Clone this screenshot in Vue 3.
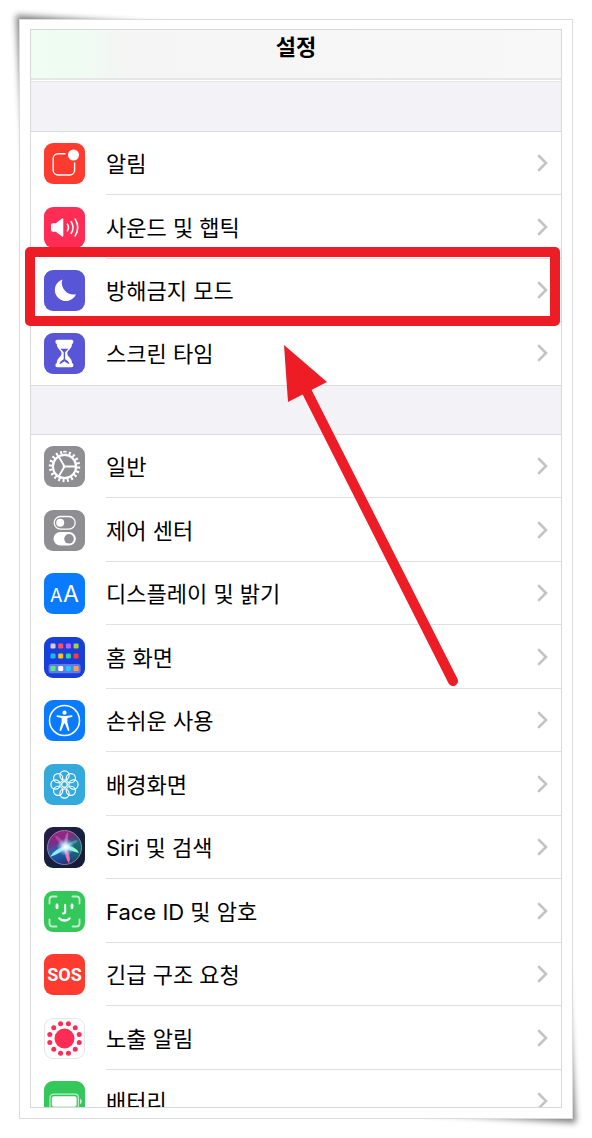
<template>
  <main class="page">
    <div class="frame">
      <svg class="shade shade-tl" viewBox="0 0 190 190" aria-hidden="true">
        <path d="M16 15L170 25L60 60L25 170z" />
      </svg>
      <svg class="shade shade-br" viewBox="0 0 190 190" aria-hidden="true">
        <path d="M174 175L20 165L130 130L165 20z" />
      </svg>

      <div class="screen">
        <header class="bar">
          <h1 class="title">설정</h1>
        </header>

        <template v-for="(group, g) in groups" :key="g">
          <div class="band" :class="{ first: g === 0 }"></div>
          <ul class="group">
            <li v-for="item in group" :key="item.icon" class="item" :class="{ cut: item.cut }">
              <a href="#" class="row" @click.prevent>
                <svg class="icon" :class="item.icon" viewBox="0 0 41 41" fill="none" aria-hidden="true">
                  <g v-if="item.icon === 'bell'">
                    <path d="M21.5 10.8H14a4.8 4.8 0 0 0-4.8 4.8v11.6A4.8 4.8 0 0 0 14 32h11.8a4.8 4.8 0 0 0 4.8-4.8V19.5" stroke="#fff" stroke-width="1.4" />
                    <circle cx="29.5" cy="12" r="5.5" fill="#fff" />
                  </g>
                  <g v-else-if="item.icon === 'sound'" stroke="#fff" stroke-linecap="round">
                    <path d="M7 18q0-1.8 1.8-1.8h3l5.9-4.5q1.6-1.1 1.6.8v16q0 1.9-1.6.8l-5.9-4.5h-3Q7 24.8 7 23z" fill="#fff" stroke="none" />
                    <path d="M23.4 17.2q2.2 3.3 0 6.6M27.2 14.7q3.7 5.8 0 11.6M31.2 12.2q5.2 8.3 0 16.6" stroke-width="1.6" />
                  </g>
                  <path v-else-if="item.icon === 'moon'" d="M18.4 9.6A11 11 0 1 0 32 24.2A11.5 11.5 0 0 1 18.4 9.6z" fill="#fff" />
                  <g v-else-if="item.icon === 'hourglass'">
                    <path d="M13 6.8h14.8q1.6 0 1.6 1.9t-1.4 2.3c0 5-4.7 6.2-4.7 9.5s4.7 4.500 4.7 9.5q1.4.4 1.4 2.3t-1.6 1.9H13q-1.6 0-1.6-1.9t1.4-2.3c0-5 4.7-6.2 4.7-9.5s-4.7-4.5-4.7-9.5q-1.4-.4-1.4-2.3t1.6-1.9z" fill="#fff" />
                    <path d="M16.4 15.8h8l-3.3 3.5v7q3.7 1.7 4.4 4.5h-1.5l-3.6-2.6-3.6 2.6h-1.5q.7-2.8 4.4-4.5v-7z" fill="#5856d6" />
                  </g>
                  <g v-else-if="item.icon === 'gear'" stroke="#fff">
                    <circle cx="20.5" cy="20.5" r="11.6" stroke-width="2.2" />
                    <circle cx="20.5" cy="20.5" r="14" stroke-width="3.4" pathLength="40" stroke-dasharray=".9 1.1" />
                    <path d="M32 20.5H20.5L14.7 10.5M20.5 20.5L14.7 30.5" stroke-width="1.8" />
                    <circle cx="20" cy="20.5" r="1" fill="#fff" />
                  </g>
                  <g v-else-if="item.icon === 'control'">
                    <rect x="10.2" y="6.5" width="21" height="12.6" rx="6.3" stroke="#fff" stroke-width="1.3" />
                    <circle cx="16.2" cy="12.8" r="4" fill="#fff" />
                    <rect x="9.5" y="22" width="22.4" height="13.6" rx="6.8" fill="#fff" />
                    <circle cx="25" cy="28.8" r="4.8" fill="#8e8e93" />
                  </g>
                  <g v-else-if="item.icon === 'display'" class="letters">
                    <text x="6" y="29" class="small">A</text>
                    <text x="19" y="29" class="large">A</text>
                  </g>
                  <g v-else-if="item.icon === 'home'">
                    <rect x="4.6" y="27" width="32" height="9.3" rx="2.5" fill="#fff" fill-opacity=".32" />
                    <rect v-for="app in apps" :key="app.key" :x="app.x" :y="app.y" width="5" height="5" rx="1.2" :fill="app.color" />
                  </g>
                  <g v-else-if="item.icon === 'access'">
                    <circle cx="20.5" cy="20.5" r="15" stroke="#fff" stroke-width="1.5" />
                    <circle cx="20.5" cy="12.7" r="2.1" fill="#fff" />
                    <path d="M13.5 15.2q7 1.6 14 0 .9-.1 1 .7t-.8 1.1l-4.3.9v4.3l2 7.7q.1 1-.7 1.1t-1.1-.7l-2.7-6.8h-.8l-2.7 6.8q-.3.8-1.1.7t-.7-1.1l2-7.700v-4.300l-4.300-.9q-.9-.3-.8-1.100t1-.7z" fill="#fff" />
                  </g>
                  <g v-else-if="item.icon === 'wallpaper'" stroke="#fff" stroke-width="1.2">
                    <circle v-for="p in petals" :key="p.key" :cx="p.x" :cy="p.y" r="4.6" />
                    <circle cx="20.5" cy="20.5" r="2.8" />
                  </g>
                  <g v-else-if="item.icon === 'siri'">
                    <defs>
                      <linearGradient id="orb" x1=".3" y1="0" x2=".6" y2="1">
                        <stop offset="0" stop-color="#a3217e" />
                        <stop offset=".3" stop-color="#7a2d86" />
                        <stop offset=".55" stop-color="#2766a8" />
                        <stop offset=".8" stop-color="#1c4b9c" />
                        <stop offset="1" stop-color="#31265e" />
                      </linearGradient>
                      <radialGradient id="teal" cx=".95" cy=".55" r=".55">
                        <stop offset="0" stop-color="#136b62" />
                        <stop offset="1" stop-color="#136b62" stop-opacity="0" />
                      </radialGradient>
                      <radialGradient id="glow">
                        <stop offset="0" stop-color="#fff" />
                        <stop offset=".35" stop-color="#d9f6ff" stop-opacity=".85" />
                        <stop offset="1" stop-color="#7fd4ff" stop-opacity="0" />
                      </radialGradient>
                    </defs>
                    <circle cx="20.5" cy="20.5" r="17" fill="url(#orb)" />
                    <circle cx="20.5" cy="20.5" r="17" fill="url(#teal)" />
                    <path d="M22 19Q10 22 6 30Q15 27 22 21z" fill="#8cecf7" />
                    <path d="M21 20Q17 9 11 8.5Q13 16 21 20z" fill="#e06bc0" fill-opacity=".45" />
                    <path d="M21 20Q19 10 24 5Q25 13 21 20z" fill="#f08fd0" fill-opacity=".5" />
                    <path d="M21 20Q30 11 34 14Q30 18 21 20z" fill="#6fd6c8" fill-opacity=".45" />
                    <path d="M20 18Q32 19 35 26Q27 24 20 21z" fill="#9df5dc" />
                    <path d="M20 20Q28 26 25 36.5Q21 31 20 20z" fill="#f06bb4" />
                    <circle cx="21.5" cy="20" r="9" fill="url(#glow)" />
                    <circle cx="20.5" cy="20.5" r="17" stroke="#9aa6b8" stroke-opacity=".75" />
                  </g>
                  <g v-else-if="item.icon === 'face'" stroke="#fff" stroke-linecap="round">
                    <path d="M5.5 12.5v-4a3 3 0 0 1 3-3h4M28.5 5.5h4a3 3 0 0 1 3 3v4M35.5 28.5v4a3 3 0 0 1-3 3h-4M12.5 35.5h-4a3 3 0 0 1-3-3v-4" stroke-width="1.9" stroke-opacity=".68" />
                    <path d="M13 14v2.8M28 14v2.8" stroke-width="2.8" />
                    <path d="M21.2 13.8v6.8q0 2-2.2 2" stroke-width="2" />
                    <path d="M15.3 27.3q5.2 4.4 10.4 0" stroke-width="2.2" />
                  </g>
                  <text v-else-if="item.icon === 'sos'" x="20.5" y="27" class="sos-text">SOS</text>
                  <g v-else-if="item.icon === 'exposure'" fill="#ff2d55">
                    <circle cx="20.5" cy="20.5" r="10" />
                    <circle v-for="d in dots" :key="d.key" :cx="d.x" :cy="d.y" r="2.5" />
                  </g>
                  <g v-else-if="item.icon === 'battery'">
                    <rect x="6" y="13.2" width="28.4" height="14.6" rx="3.5" stroke="#fff" stroke-opacity=".7" stroke-width="1.2" />
                    <rect x="7.8" y="15.2" width="24.8" height="10.6" rx="1.8" fill="#fff" />
                    <path d="M36 17.5q1.8.8 1.8 3t-1.8 3z" fill="#fff" fill-opacity=".7" />
                  </g>
                </svg>
                <span class="body">
                  <span class="label">{{ item.label }}</span>
                  <svg class="chevron" viewBox="0 0 11 18" fill="none" aria-hidden="true">
                    <path d="M2 2l7 7-7 7" stroke="currentColor" stroke-width="2.6" stroke-linecap="round" />
                  </svg>
                </span>
              </a>
              <template v-if="item.marked">
                <div class="marker"></div>
                <svg class="arrow" viewBox="0 0 175 342" aria-hidden="true">
                  <path d="M0 0L43 37L4 57z" fill="#ee1c25" />
                  <path d="M22 45L169 336" stroke="#ee1c25" stroke-width="10" stroke-linecap="round" />
                </svg>
              </template>
            </li>
          </ul>
        </template>
      </div>
    </div>
  </main>
</template>

<script setup>
const groups = [
  [
    { icon: 'bell', label: '알림' },
    { icon: 'sound', label: '사운드 및 햅틱' },
    { icon: 'moon', label: '방해금지 모드', marked: true },
    { icon: 'hourglass', label: '스크린 타임' },
  ],
  [
    { icon: 'gear', label: '일반' },
    { icon: 'control', label: '제어 센터' },
    { icon: 'display', label: '디스플레이 및 밝기' },
    { icon: 'home', label: '홈 화면' },
    { icon: 'access', label: '손쉬운 사용' },
    { icon: 'wallpaper', label: '배경화면' },
    { icon: 'siri', label: 'Siri 및 검색' },
    { icon: 'face', label: 'Face ID 및 암호' },
    { icon: 'sos', label: '긴급 구조 요청' },
    { icon: 'exposure', label: '노출 알림' },
    { icon: 'battery', label: '배터리', cut: true },
  ],
]

const colors = [
  ['#d1d1d6', '#ff5164', '#b366ff', '#a4d636'],
  ['#1cb8ff', '#ffc21a', '#2fd69a', '#ff3b30'],
  ['#54ec76', '#ffffff', '#1ccaff', '#ff9f40'],
]
const rowY = [6.5, 16.5, 29]
const apps = colors.flatMap((line, r) =>
  line.map((color, c) => ({ key: `${r}-${c}`, color, x: 6.5 + c * 7.7, y: rowY[r] }))
)

// Points spread evenly on a circle around the icon centre
function ring(count, radius, offset) {
  return Array.from({ length: count }, (_, i) => {
    const angle = ((i + offset) * 2 * Math.PI) / count
    return { key: i, x: 20.5 + radius * Math.cos(angle), y: 20.5 + radius * Math.sin(angle) }
  })
}

const petals = ring(8, 9, 0)
const dots = ring(12, 15.2, 0.5)
</script>

<style>
body {
  margin: 0;
  background: #fff;
}
</style>

<style scoped>
.page {
  padding: 19px;
  font-family: Inter, "Noto Sans CJK KR", sans-serif;
  color: #000;
  isolation: isolate;
}

.frame {
  position: relative;
  border: 1px solid #dcdcdc;
  padding: 9px 10px 10px;
  background: #fff;
}

/* Lifted corners behind the frame */
.shade {
  position: absolute;
  z-index: -1;
  width: 190px;
  height: 190px;
  fill: rgba(0, 0, 0, 0.5);
  filter: blur(3px);
}

.shade-tl {
  top: -20px;
  left: -20px;
}

.shade-br {
  right: -20px;
  bottom: -20px;
}

.screen {
  border: 1px solid #d8d8da;
  background: #fff;
}

.bar {
  height: 48px;
  border-bottom: 2px solid #e6e6e6;
  margin-bottom: 1px;
  background: linear-gradient(90deg, #effdf2 0, #effcf2 9%, #f4f5f4 17%, #f6f6f6 50%, #f8f8f8 100%);
}

.title {
  margin: 0;
  font-size: 22px;
  font-weight: 600;
  line-height: 34px;
  text-align: center;
}

.band {
  box-sizing: border-box;
  height: 49px;
  border-bottom: 1px solid #dcdcde;
  background: #f2f2f7;
}

.band.first {
  height: 51px;
  border-top: 1px solid #e6e6e8;
}

.group {
  margin: 0;
  padding: 0;
  list-style: none;
}

.item {
  position: relative;
  height: 63px;
}

.item:nth-child(even) {
  height: 64px;
}

.item.cut {
  height: 37px;
  overflow: hidden;
}

.row {
  box-sizing: border-box;
  display: flex;
  align-items: center;
  gap: 21px;
  height: 100%;
  min-height: 63px;
  padding-left: 13px;
  color: inherit;
  text-decoration: none;
}

.icon {
  flex-shrink: 0;
  width: 41px;
  height: 41px;
  border-radius: 9px;
}

.bell,
.sos { background: #ff3b30; }
.sound { background: #ff2d55; }
.moon,
.hourglass { background: #5856d6; }
.gear,
.control { background: #8e8e93; }
.display,
.access { background: #0a7aff; }
.home { background: #183fdb; }
.wallpaper { background: #34aadc; }
.siri { background: linear-gradient(135deg, #2a1c4a, #14203c 60%, #1b1836); }
.face,
.battery { background: #34c759; }

.exposure {
  background: #fff;
  box-shadow: inset 0 0 0 1px #e5e5e7;
}

.letters { fill: #fff; }
.small { font-size: 18px; }
.large { font-size: 23px; }

.sos-text {
  fill: #fff;
  font-family: Roboto, sans-serif;
  font-size: 18px;
  font-weight: 700;
  text-anchor: middle;
}

.body {
  flex: 1;
  align-self: stretch;
  display: flex;
  align-items: center;
  justify-content: space-between;
  padding-right: 13px;
  border-bottom: 1px solid #e0e0e2;
}

.item:last-child .body {
  border-bottom-color: transparent;
}

.group:nth-of-type(1) .item:last-child .row {
  border-bottom: 1px solid #dcdcde;
}

.label {
  padding-top: 2px;
  font-size: 22px;
  line-height: 32px;
  white-space: nowrap;
}

.chevron {
  flex-shrink: 0;
  width: 11px;
  height: 18px;
  color: #c4c4c6;
}

/* Callout drawn over the list */
.marker {
  position: absolute;
  z-index: 1;
  top: -12px;
  right: 1px;
  bottom: -4px;
  left: -6px;
  border: 10px solid #ee1c25;
  border-radius: 5px;
  pointer-events: none;
}

.arrow {
  position: absolute;
  z-index: 1;
  top: 86px;
  left: 253px;
  width: 175px;
  height: 342px;
  pointer-events: none;
}
</style>
